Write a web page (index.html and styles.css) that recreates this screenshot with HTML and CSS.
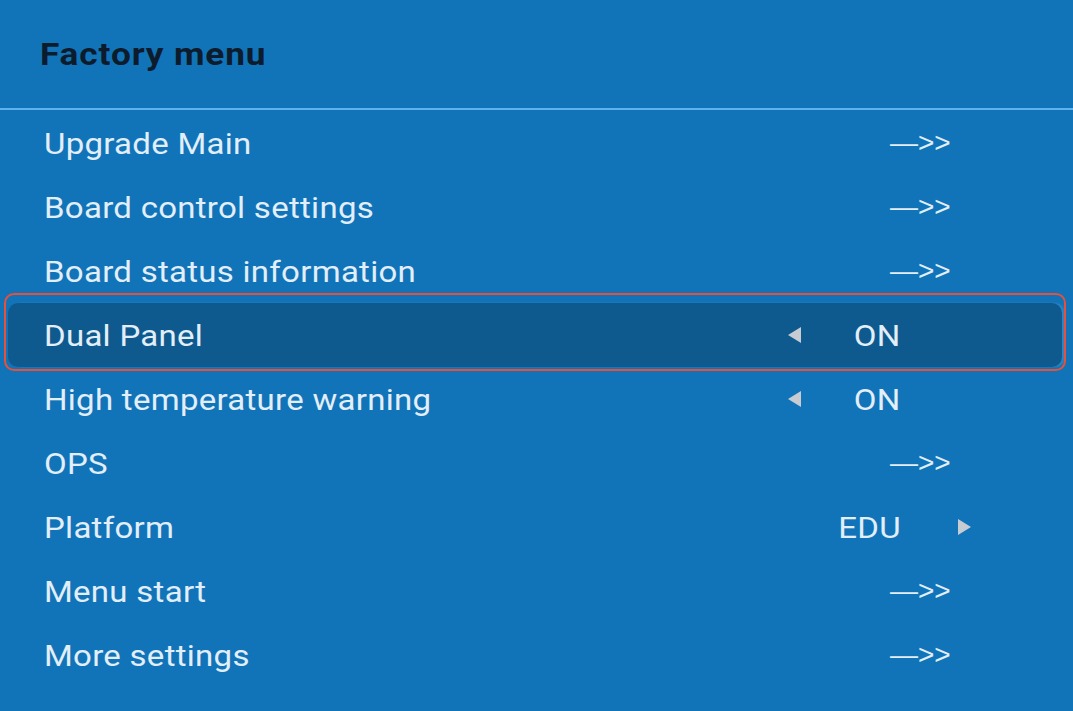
FILE: index.html
```html
<!DOCTYPE html>
<html lang="en">
<head>
    <meta charset="UTF-8">
    <title>Factory menu</title>
    <link rel="stylesheet" href="styles.css">
</head>
<body>
<div class="menu">
    <div class="menu-header">
        <h1>Factory menu</h1>
    </div>
    <ul class="menu-list">
        <li class="row">
            <span class="label">Upgrade Main</span>
            <span class="go">&mdash;&gt;&gt;</span>
        </li>
        <li class="row">
            <span class="label">Board control settings</span>
            <span class="go">&mdash;&gt;&gt;</span>
        </li>
        <li class="row">
            <span class="label">Board status information</span>
            <span class="go">&mdash;&gt;&gt;</span>
        </li>
        <li class="row selected">
            <span class="label">Dual Panel</span>
            <span class="tri tri-left"></span>
            <span class="value">ON</span>
        </li>
        <li class="row">
            <span class="label">High temperature warning</span>
            <span class="tri tri-left"></span>
            <span class="value">ON</span>
        </li>
        <li class="row">
            <span class="label">OPS</span>
            <span class="go">&mdash;&gt;&gt;</span>
        </li>
        <li class="row">
            <span class="label">Platform</span>
            <span class="value">EDU</span>
            <span class="tri tri-right"></span>
        </li>
        <li class="row">
            <span class="label">Menu start</span>
            <span class="go">&mdash;&gt;&gt;</span>
        </li>
        <li class="row">
            <span class="label">More settings</span>
            <span class="go">&mdash;&gt;&gt;</span>
        </li>
    </ul>
</div>
</body>
</html>
```

FILE: styles.css
```css
body {
    margin: 0;
    padding: 0;
    background-color: #1174b9;
    font-family: Roboto, 'Liberation Sans', Arial, sans-serif;
}

.menu {
    width: 1073px;
    height: 711px;
    overflow: hidden;
}

.menu-header {
    height: 108px;
    border-bottom: 2px solid #5cb3ee;
    display: flex;
    align-items: center;
    padding-left: 40px;
}

.menu-header h1 {
    margin: 0;
    font-size: 32px;
    font-weight: bold;
    letter-spacing: 0.8px;
    color: #0d1c2c;
    transform: scaleX(1.1);
    transform-origin: left center;
}

.menu-list {
    list-style-type: none;
    margin: 0;
    padding: 1px 0 0 0;
}

.row {
    height: 64px;
    display: grid;
    grid-template-columns: 1fr 40px 80px 80px;
    align-items: center;
    padding: 0 93px 0 44px;
    color: #e2eef8;
    font-size: 30px;
    letter-spacing: 0.25px;
    position: relative;
}

.row.selected {
    margin: 0 11px 0 8px;
    padding: 0 82px 0 36px;
    background-color: #0e5a8f;
    border-radius: 10px;
    box-shadow: 3px 0 2px rgba(255, 255, 255, 0.12);
}

.row.selected::before {
    content: '';
    position: absolute;
    top: -10px;
    bottom: -4px;
    left: -4px;
    right: -4px;
    border: 2px solid #e8503a;
    border-radius: 10px;
}

.label {
    grid-column: 1;
    justify-self: start;
    transform: scaleX(1.1);
    transform-origin: left center;
}

.go {
    grid-column: 3 / span 2;
    padding-left: 70px;
    font-family: 'Liberation Sans', Arial, sans-serif;
    font-size: 28px;
    letter-spacing: 0;
    color: #e2eef8;
}

.value {
    grid-column: 3;
    justify-self: end;
    margin-right: -1px;
    transform: scaleX(1.1);
    transform-origin: right center;
}

.tri {
    width: 0;
    height: 0;
    border-top: 8px solid transparent;
    border-bottom: 8px solid transparent;
}

.tri-left {
    grid-column: 2;
    border-right: 13px solid #c6ccd2;
    margin-left: 8px;
}

.tri-right {
    grid-column: 4;
    border-left: 13px solid #c6ccd2;
    margin-left: 58px;
}
```
